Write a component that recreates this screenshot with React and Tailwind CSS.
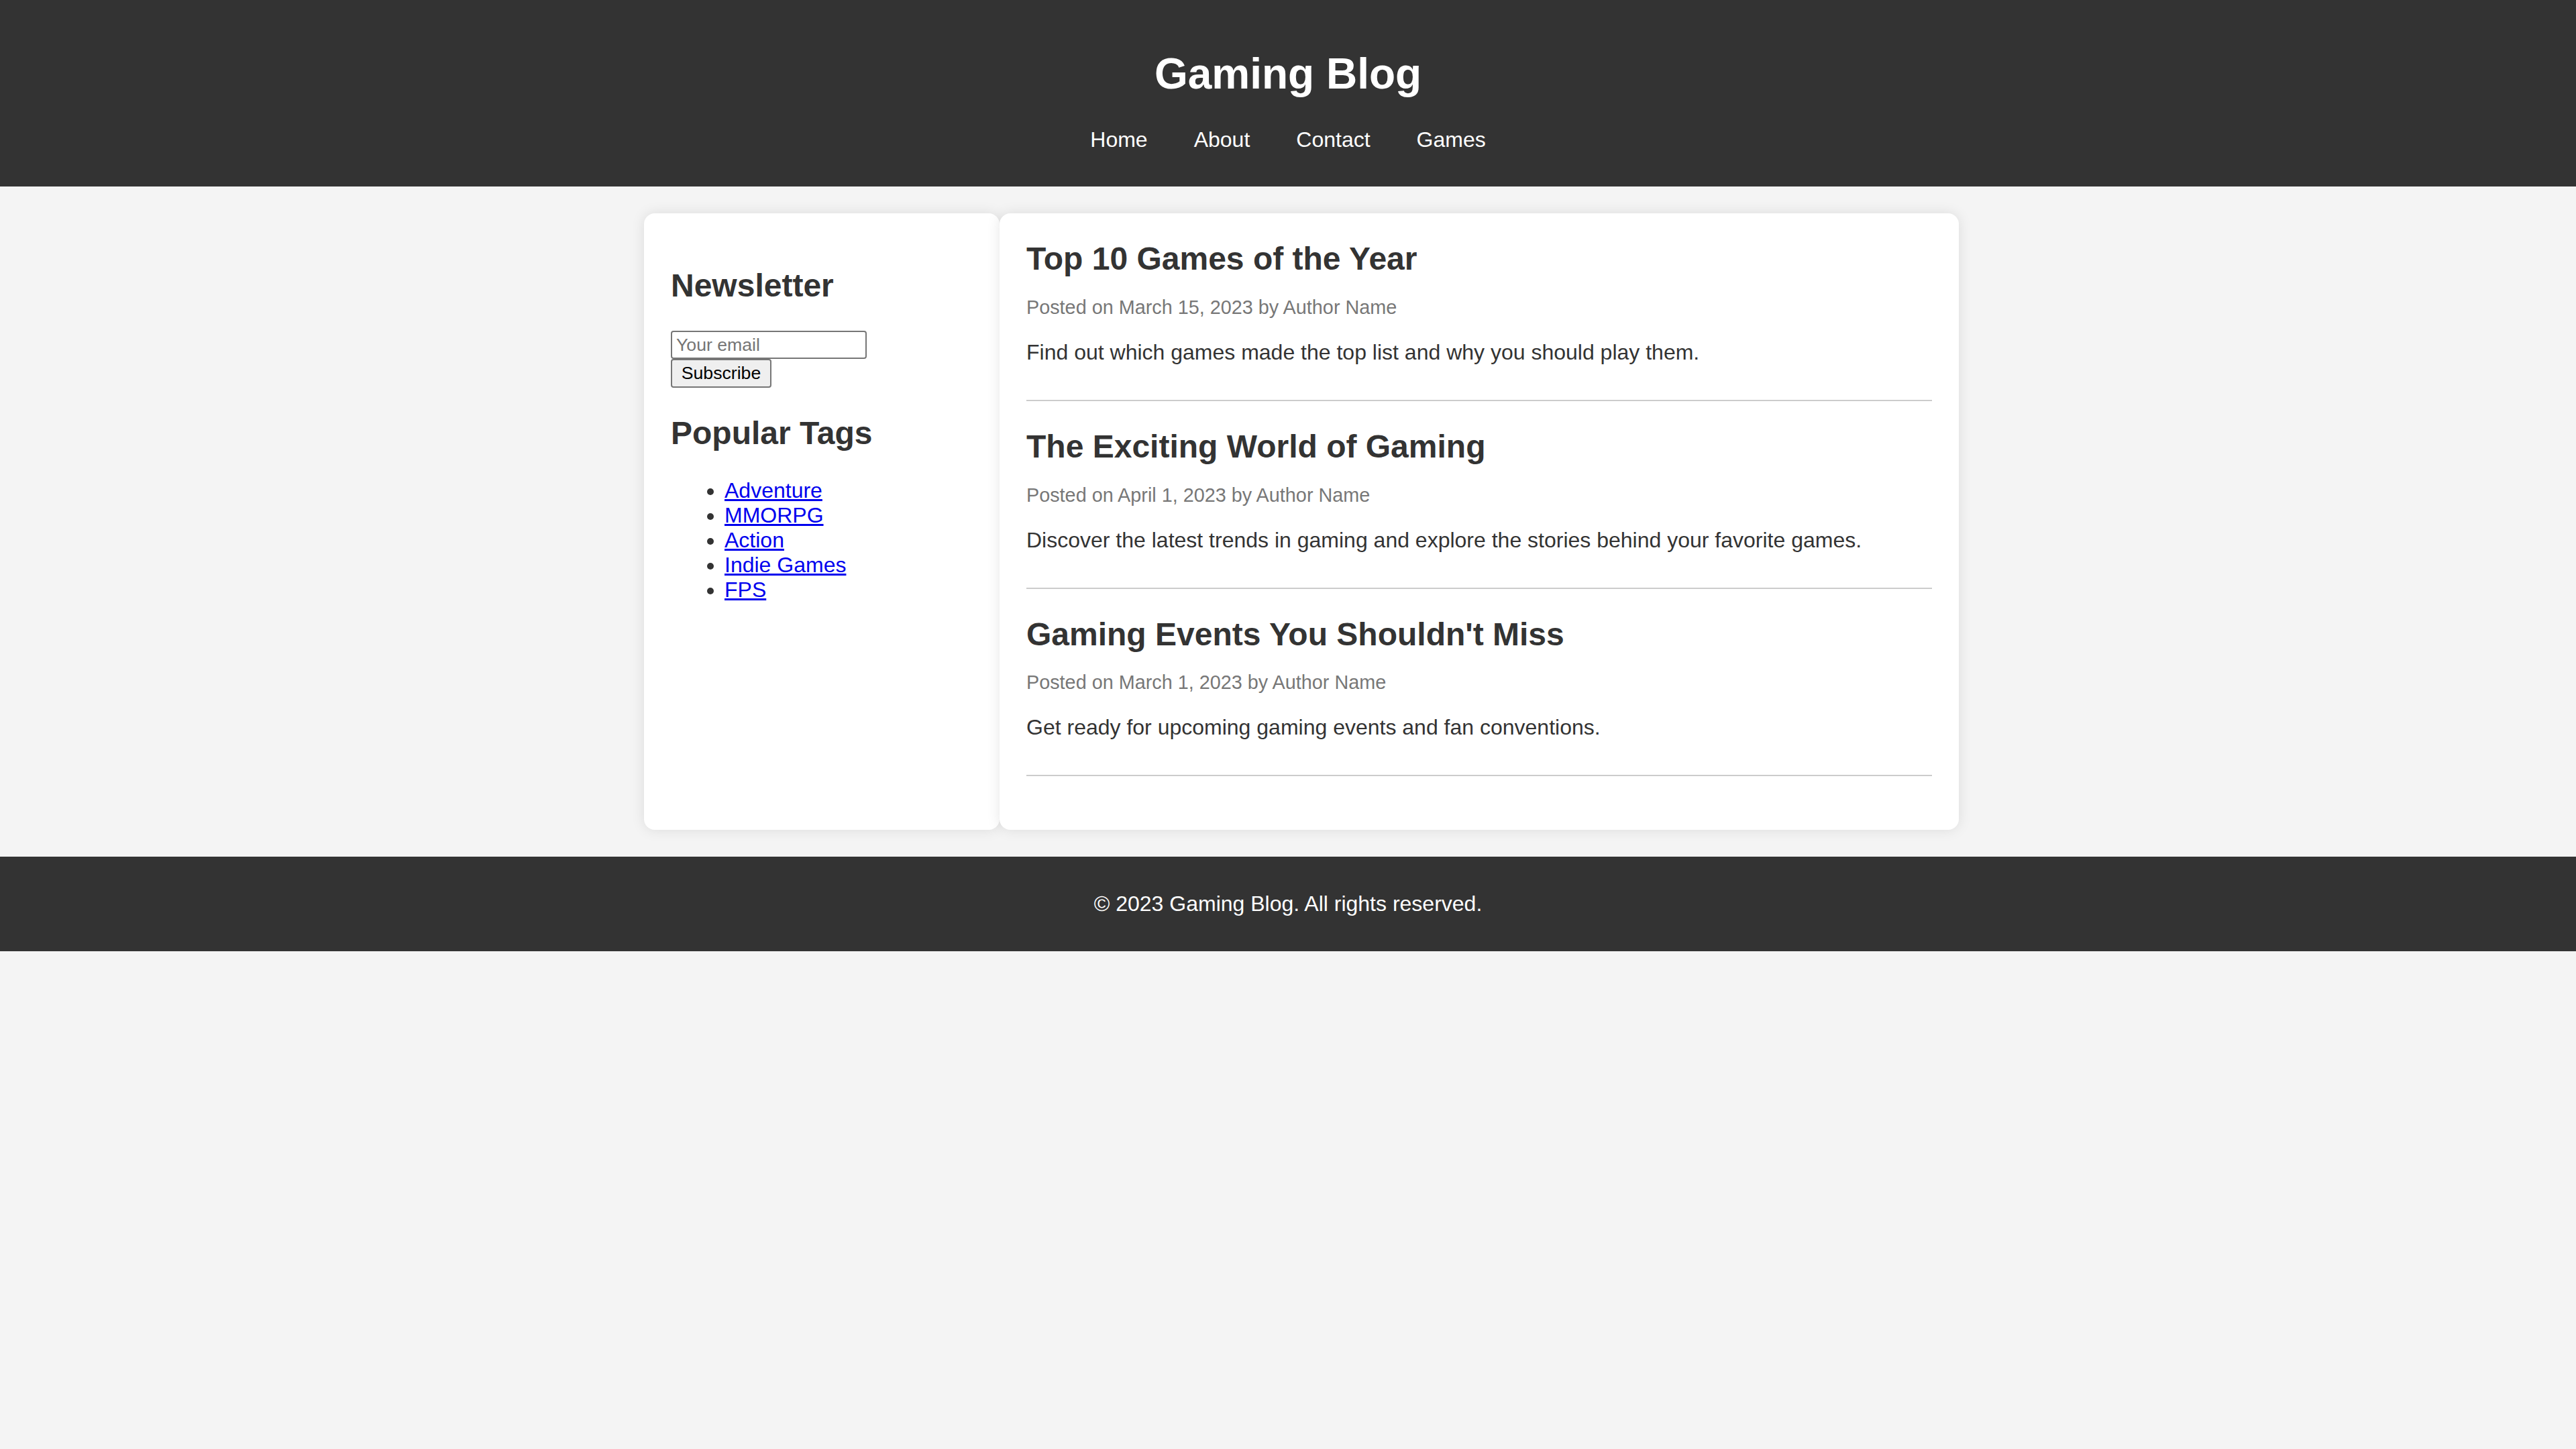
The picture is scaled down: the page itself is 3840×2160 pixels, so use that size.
import React from "react";

const posts = [
  {
    title: "Top 10 Games of the Year",
    date: "March 15, 2023",
    excerpt: "Find out which games made the top list and why you should play them.",
  },
  {
    title: "The Exciting World of Gaming",
    date: "April 1, 2023",
    excerpt: "Discover the latest trends in gaming and explore the stories behind your favorite games.",
  },
  {
    title: "Gaming Events You Shouldn't Miss",
    date: "March 1, 2023",
    excerpt: "Get ready for upcoming gaming events and fan conventions.",
  },
];

const tags = ["Adventure", "MMORPG", "Action", "Indie Games", "FPS"];

export default function App() {
  return (
    <div className="min-h-screen bg-[#f4f4f4] text-[#333] leading-[normal] font-['Liberation_Sans',Arial,sans-serif]">
      {/* Header */}
      <header className="bg-[#333] text-white text-center pt-[30px] pb-[51px]">
        <h1 className="text-[64px] font-bold my-[43px]">Gaming Blog</h1>
        <nav className="flex justify-center gap-[69px] text-[32px]">
          <a href="#" className="text-white">Home</a>
          <a href="#" className="text-white">About</a>
          <a href="#" className="text-white">Contact</a>
          <a href="#" className="text-white">Games</a>
        </nav>
      </header>

      {/* Content */}
      <main className="py-[40px]">
        <div className="mx-auto w-[2000px] pl-[40px] flex">
          <aside className="flex-1 bg-white rounded-[16px] shadow-[0_0_20px_rgba(0,0,0,0.1)] p-[40px]">
            <h2 className="text-[48px] font-bold mt-[40px] mb-[40px]">Newsletter</h2>
            <form onSubmit={(e) => e.preventDefault()}>
              <input
                type="email"
                placeholder="Your email"
                className="block w-[292px] h-[42px] border-2 border-[#767676] rounded-[4px] px-[6px] text-[26.67px] text-black placeholder:text-[#757575] bg-white"
              />
              <button
                type="submit"
                className="block w-[150px] h-[43px] bg-[#efefef] border-2 border-[#767676] rounded-[4px] text-[26.67px] text-black"
              >
                Subscribe
              </button>
            </form>
            <h2 className="text-[48px] font-bold mt-[40px] mb-[40px]">Popular Tags</h2>
            <ul className="list-disc pl-[80px] text-[32px]">
              {tags.map((t) => (
                <li key={t}>
                  <a href="#" className="text-[#0000ee] underline">{t}</a>
                </li>
              ))}
            </ul>
          </aside>

          <section className="flex-[3] bg-white rounded-[16px] shadow-[0_0_20px_rgba(0,0,0,0.1)] p-[40px]">
            {posts.map((p) => (
              <article key={p.title} className="border-b-2 border-[#ccc] pb-[20px] mb-[40px]">
                <h2 className="text-[48px] font-bold">{p.title}</h2>
                <p className="text-[28.8px] text-[#777] mt-[28.8px]">
                  Posted on {p.date} by Author Name
                </p>
                <p className="text-[32px] my-[32px]">{p.excerpt}</p>
              </article>
            ))}
          </section>
        </div>
      </main>

      {/* Footer */}
      <footer className="bg-[#333] text-white text-center py-[20px]">
        <p className="text-[32px] my-[32px]">© 2023 Gaming Blog. All rights reserved.</p>
      </footer>
    </div>
  );
}
